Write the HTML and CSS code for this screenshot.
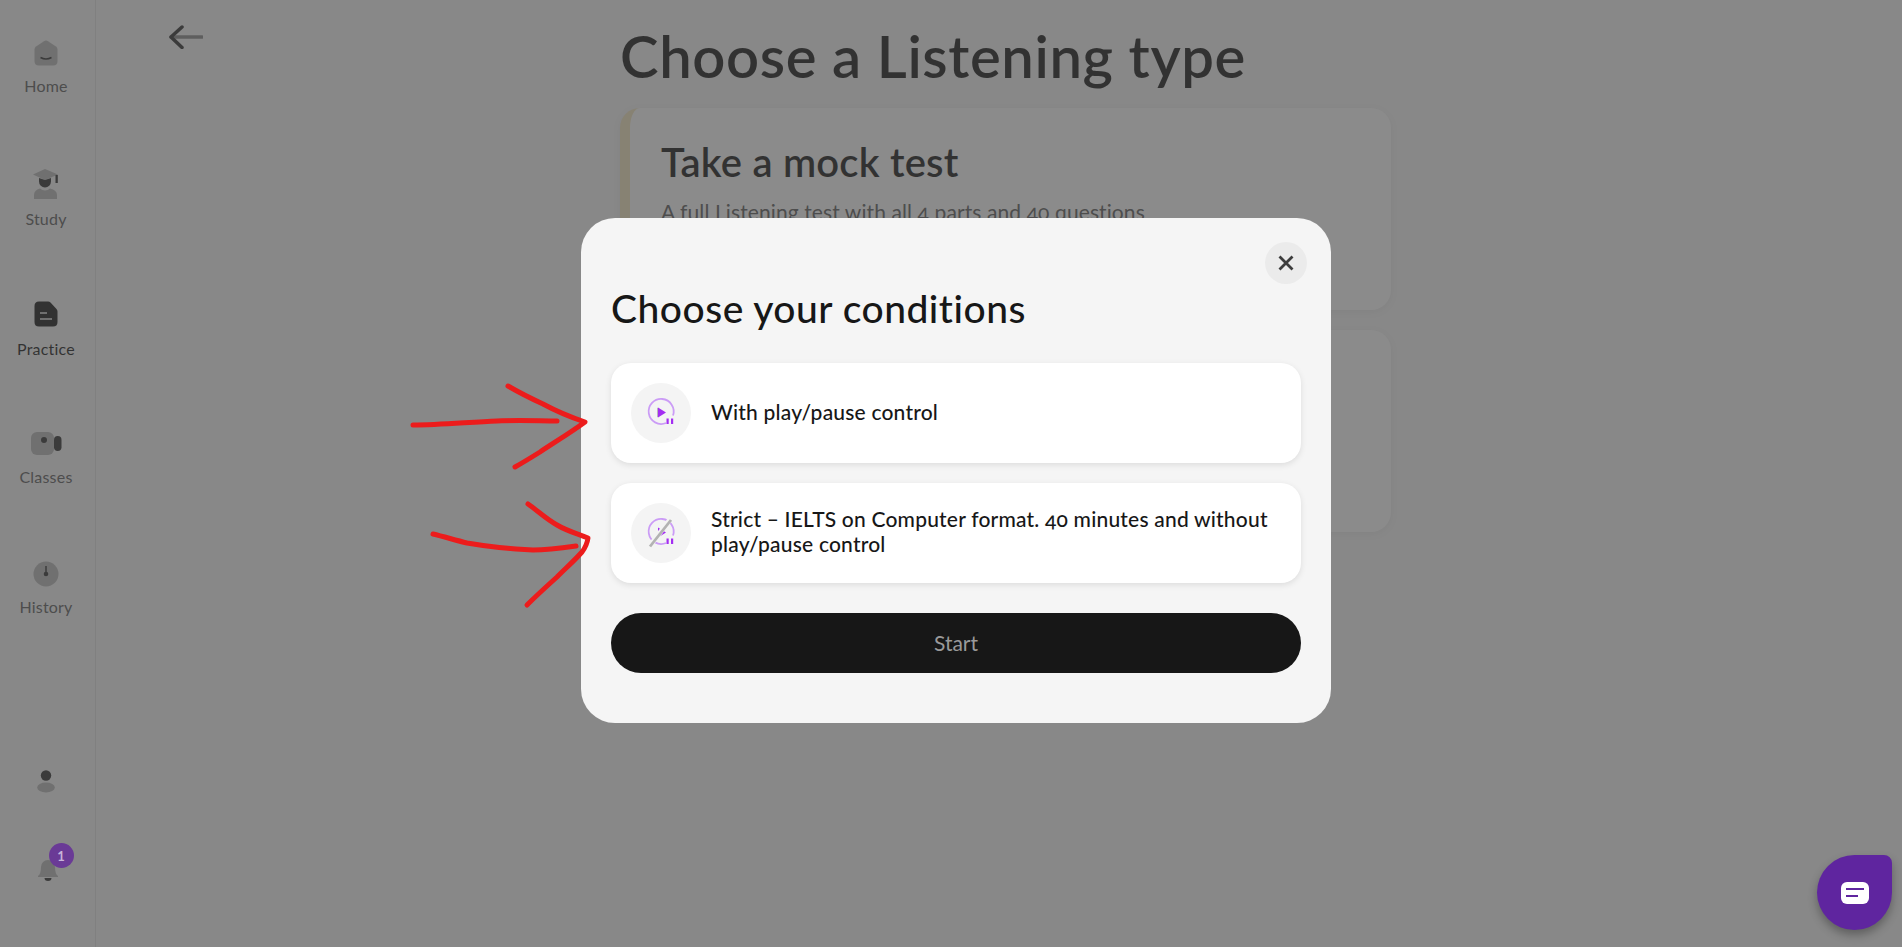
FILE: index.html
```html
<!DOCTYPE html>
<html lang="en">
<head>
<meta charset="utf-8">
<title>Choose a Listening type</title>
<link rel="stylesheet" href="styles.css">
</head>
<body>
<div class="page">
  <aside class="sidebar">
    <nav class="nav">
      <a class="nav-item nav-home">
        <svg width="24" height="26" viewBox="0 0 24 26"><path d="M10 1.2 Q12 0 14 1.2 L22 6.5 Q23.500 7.500 23.500 9.500 V21 Q23.500 25.500 19 25.500 H5 Q.5 25.500 .5 21 V9.500 Q.5 7.500 2 6.500Z" fill="#b8b8b8"/><path d="M6.500 17.500 Q12 20.500 17.500 17.500" fill="none" stroke="#2f2f2f" stroke-width="1.500"/></svg>
        <span>Home</span>
      </a>
      <a class="nav-item nav-study">
        <svg width="26" height="30" viewBox="0 0 26 30"><path d="M12 0 L25 5.500 L12 11 L0 5.500Z" fill="#b8b8b8"/><rect x="22.500" y="6" width="2.300" height="8" fill="#2f2f2f"/><path d="M6 9 L12 11 L18 9 V12.500 A6 6 0 0 1 6 12.500Z" fill="#2f2f2f"/><path d="M1 30 V26 Q1 21 7 19.500 Q9 21.500 12 21.500 Q15 21.500 17 19.500 Q24 21 24 26 V30Z" fill="#b8b8b8"/></svg>
        <span>Study</span>
      </a>
      <a class="nav-item nav-active nav-practice">
        <svg width="24" height="26" viewBox="0 0 24 26"><path d="M5 .5 H14 Q15.500 .5 16.500 1.500 L22.500 8 Q23.500 9 23.500 10.500 V21 Q23.500 25.500 19 25.500 H5 Q.5 25.500 .5 21 V5 Q.5 .5 5 .5Z" fill="#171717"/><rect x="6" y="11" width="7" height="2" fill="#b8b8b8"/><rect x="6" y="17" width="12" height="2" fill="#b8b8b8"/></svg>
        <span>Practice</span>
      </a>
      <a class="nav-item nav-classes">
        <svg width="31" height="23" viewBox="0 0 31 23"><rect x="0" y="0" width="23" height="23" rx="6" fill="#b8b8b8"/><circle cx="13" cy="8" r="3" fill="#2f2f2f"/><rect x="23" y="4" width="7.500" height="15" rx="3.700" fill="#2f2f2f"/></svg>
        <span>Classes</span>
      </a>
      <a class="nav-item nav-history">
        <svg width="26" height="26" viewBox="0 0 26 26"><circle cx="13" cy="13" r="12.500" fill="#b8b8b8"/><path d="M13 5 V13" stroke="#2f2f2f" stroke-width="1.500"/><circle cx="13" cy="13" r="2.300" fill="#2f2f2f"/></svg>
        <span>History</span>
      </a>
    </nav>
    <div class="sidebar-foot">
      <svg class="foot-user" width="18" height="23" viewBox="0 0 18 23"><circle cx="9" cy="5.500" r="5.200" fill="#2f2f2f"/><ellipse cx="9" cy="17.500" rx="8.800" ry="5" fill="#b8b8b8"/></svg>
      <div class="bell">
        <svg width="22" height="23" viewBox="0 0 22 23"><path d="M1 17 Q4 15 4 8 A7 7 0 0 1 18 8 Q18 15 21 17 V18 H1Z" fill="#b8b8b8"/><path d="M7.500 19 H14.500 A3.500 3 0 0 1 7.500 19Z" fill="#2f2f2f"/></svg>
        <span class="badge">1</span>
      </div>
    </div>
  </aside>
  <main class="main">
    <svg class="back" width="34" height="24" viewBox="0 0 34 24"><path d="M2 12 H33" stroke="#707070" stroke-width="3.500" stroke-linecap="round" opacity=".8"/><path d="M13 2 L2 12 L13 22.500" fill="none" stroke="#2f2f2f" stroke-width="3.500" stroke-linecap="round" stroke-linejoin="round"/></svg>
    <section class="content">
      <h1 class="page-title">Choose a Listening type</h1>
      <article class="type-card">
        <h2 class="type-title">Take a mock test</h2>
        <p class="type-desc">A full Listening test with all 4 parts and 40 questions</p>
      </article>
      <article class="type-card type-card-second"></article>
    </section>
  </main>
</div>

<div class="overlay">
  <div class="modal">
    <div class="modal-close-row">
      <button class="close" aria-label="Close">
        <svg width="16" height="16" viewBox="0 0 16 16"><path d="M1.500 1.500 L14.500 14.500 M14.500 1.500 L1.500 14.500" stroke="#3d3d3d" stroke-width="2.800"/></svg>
      </button>
    </div>
    <h2 class="modal-title">Choose your conditions</h2>
    <div class="options">
      <div class="option">
        <span class="option-icon">
          <svg width="32" height="32" viewBox="0 0 32 32"><path d="M21 26 A12.500 12.500 0 1 1 28 18.500" fill="none" stroke="#cb9cf6" stroke-width="1.800"/><path d="M12 10.500 L20 15.500 L12 20.500Z" fill="#b9b9b9"/><path d="M13 10.500 L21 15.500 L13 20.500Z" fill="#a32ef2"/><rect x="21.500" y="21.500" width="2.200" height="5.500" fill="#a32ef2"/><rect x="26" y="21.500" width="2.200" height="5.500" fill="#a32ef2"/></svg>
        </span>
        <span class="option-text">With play/pause control</span>
      </div>
      <div class="option">
        <span class="option-icon">
          <svg width="32" height="32" viewBox="0 0 32 32"><path d="M21 26 A12.500 12.500 0 1 1 28 18.500" fill="none" stroke="#cb9cf6" stroke-width="1.800"/><path d="M13 10.500 L21 15.500 L13 20.500Z" fill="#a32ef2"/><path d="M4 30 L25 2.500" stroke="#f4f4f4" stroke-width="5"/><path d="M5 29.500 L26 3" stroke="#b3b3b3" stroke-width="2.800"/><rect x="21.500" y="21.500" width="2.200" height="5.500" fill="#a32ef2"/><rect x="26" y="21.500" width="2.200" height="5.500" fill="#a32ef2"/></svg>
        </span>
        <span class="option-text">Strict – IELTS on Computer format. 40 minutes and without play/pause control</span>
      </div>
    </div>
    <button class="start">Start</button>
  </div>
</div>

<svg class="annotations" width="1902" height="947" viewBox="0 0 1902 947">
  <g fill="none" stroke="#ec1c1c" stroke-width="5" stroke-linecap="round" stroke-linejoin="round">
    <path d="M413 425 C440 425 470 422 497 421 C520 420 540 421 557 421"/>
    <path d="M508 386 C520 393 530 398 543 404 C556 411 570 417 585 422 C570 433 555 442 540 452 C532 457 524 462 515 467"/>
    <path d="M433 534 C445 537 455 540 467 543 C490 547 510 549 533 550 C548 550 562 548 576 546"/>
    <path d="M528 504 C538 511 546 519 557 525 C567 531 578 534 588 538 C587 545 585 548 582 552 C574 561 566 568 557 577 C547 586 537 595 527 605"/>
  </g>
</svg>

<div class="chat">
  <svg width="28" height="22" viewBox="0 0 28 22"><rect x="0" y="0" width="28" height="22" rx="6" fill="#fff"/><rect x="5" y="6" width="18" height="2" fill="#5f259f"/><rect x="5" y="13" width="12" height="2" fill="#5f259f"/></svg>
</div>
</body>
</html>
```
FILE: styles.css
```css
* { box-sizing: border-box; }

html, body {
  margin: 0;
  height: 100%;
  overflow: hidden;
}

body {
  background: #f6f6f6;
  color: #171717;
  font-family: "Lato", "Open Sans", sans-serif;
}

.page {
  display: flex;
  height: 947px;
}

/* Sidebar */
.sidebar {
  width: 96px;
  flex: none;
  border-right: 1px solid #e2e2e2;
  display: flex;
  flex-direction: column;
  justify-content: space-between;
  align-items: center;
  padding-top: 40px;
  padding-right: 3px;
  padding-bottom: 65px;
}

.nav {
  display: grid;
  grid-template-rows: 129px 132px 131px 129px auto;
  justify-items: center;
  width: 100%;
}

.nav-item {
  display: flex;
  flex-direction: column;
  align-items: center;
  gap: 10px;
  font-size: 16px;
  line-height: 20px;
  letter-spacing: .2px;
  color: #5c5c5c;
}

.nav-practice, .nav-classes { gap: 12px; }
.nav-active { color: #171717; }
.nav-item svg { display: block; }

.sidebar-foot {
  display: flex;
  flex-direction: column;
  align-items: center;
  gap: 66px;
}

.foot-user { display: block; }

.bell {
  position: relative;
  margin-left: 3px;
  height: 23px;
}

.bell svg { display: block; }

.badge {
  position: absolute;
  z-index: 20;
  left: 12px;
  top: -16px;
  width: 25px;
  height: 25px;
  border-radius: 50%;
  background: #6a3a96;
  color: #c8b4da;
  font-size: 13px;
  font-weight: 700;
  display: flex;
  align-items: center;
  justify-content: center;
}

/* Main */
.main {
  flex: 1;
  display: flex;
  align-items: flex-start;
  gap: 417px;
  padding-left: 73px;
}

.back {
  flex: none;
  margin-top: 25px;
}

.content {
  width: 771px;
  flex: none;
}

.page-title {
  margin: 0;
  padding-top: 21px;
  height: 108px;
  font-size: 58px;
  line-height: 70px;
  font-weight: 600;
  letter-spacing: .6px;
  color: #171717;
}

.type-card {
  background: #fff;
  border-left: 10px solid #f4e6bf;
  border-radius: 20px;
  padding: 31px 30px 30px 31px;
  height: 202px;
  box-shadow: 0 2px 8px rgba(0, 0, 0, .06);
}

.type-card-second { margin-top: 20px; }

.type-title {
  margin: 0;
  font-size: 40px;
  line-height: 46px;
  font-weight: 600;
  letter-spacing: .2px;
}

.type-desc {
  margin: 14px 0 0;
  font-size: 21px;
  line-height: 26px;
  letter-spacing: .1px;
  color: #5c5c5c;
  font-variant-numeric: oldstyle-nums;
}

/* Overlay and modal */
.overlay {
  position: fixed;
  inset: 0;
  z-index: 10;
  background: rgba(68, 68, 68, .62);
  display: flex;
  align-items: center;
  justify-content: center;
  padding-left: 10px;
  padding-bottom: 6px;
}

.modal {
  width: 750px;
  background: #f5f5f5;
  border-radius: 34px;
  padding: 24px 30px 50px;
}

.modal-close-row {
  display: flex;
  justify-content: flex-end;
  margin-right: -6px;
}

.close {
  width: 42px;
  height: 42px;
  padding: 0;
  border: 0;
  border-radius: 50%;
  background: #ebebeb;
  display: flex;
  align-items: center;
  justify-content: center;
}

.modal-title {
  margin: 1px 0 0;
  font-size: 39px;
  line-height: 46px;
  font-weight: 500;
  letter-spacing: .5px;
  color: #171717;
}

.options {
  margin-top: 32px;
  display: flex;
  flex-direction: column;
  gap: 20px;
}

.option {
  height: 100px;
  background: #fff;
  border-radius: 20px;
  padding: 0 20px;
  display: flex;
  align-items: center;
  gap: 20px;
  box-shadow: 0 2px 6px rgba(0, 0, 0, .1);
}

.option-icon {
  width: 60px;
  height: 60px;
  flex: none;
  border-radius: 50%;
  background: #f4f4f4;
  display: flex;
  align-items: center;
  justify-content: center;
}

.option-text {
  font-size: 21px;
  line-height: 25px;
  font-weight: 500;
  letter-spacing: .2px;
  margin-top: -4px;
  color: #171717;
  font-variant-numeric: oldstyle-nums;
}

.start {
  display: block;
  width: 100%;
  height: 60px;
  margin-top: 30px;
  padding-bottom: 2px;
  border: 0;
  border-radius: 30px;
  background: #171717;
  color: #9a9a9a;
  font-family: inherit;
  font-size: 21px;
}

/* Hand-drawn arrows lie over the page */
.annotations {
  position: fixed;
  left: 0;
  top: 0;
  z-index: 30;
  pointer-events: none;
}

/* Chat launcher stays above the overlay */
.chat {
  position: fixed;
  right: 10px;
  bottom: 17px;
  z-index: 40;
  width: 75px;
  height: 75px;
  border-radius: 50% 8px 50% 50%;
  background: #5f259f;
  box-shadow: 0 5px 10px rgba(0, 0, 0, .3);
  display: flex;
  align-items: center;
  justify-content: center;
}
```
